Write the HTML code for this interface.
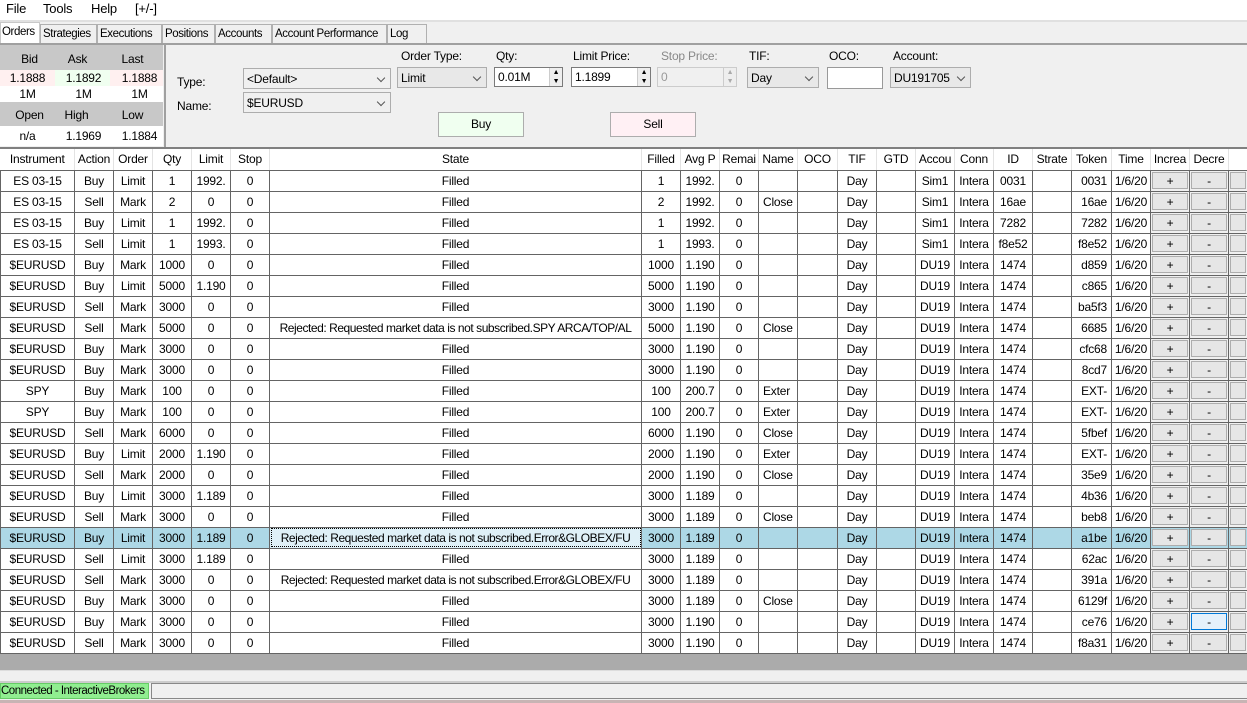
<!DOCTYPE html>
<html><head><meta charset="utf-8">
<style>
*{box-sizing:border-box;margin:0;padding:0}
body{width:1247px;height:703px;overflow:hidden;background:#f0f0f0;font-family:"Liberation Sans",Arial,sans-serif;font-size:12px;color:#000;position:relative;letter-spacing:-0.2px}
.a{position:absolute}
.menu span{position:absolute;top:0;font-size:13px}
.tab{position:absolute;top:24px;height:19px;border:1px solid #b0b0b0;border-bottom:none;background:#f0f0f0;font-size:11.5px;padding:3px 2px 0;white-space:nowrap;overflow:hidden;letter-spacing:-0.4px}
.sel{background:#fff;top:22px;height:21px;border-color:#c8c8c8}
.q{position:absolute;width:55px;text-align:center}
.dd{position:absolute;height:21px;border:1px solid #adadad;background:#e8e8e8;padding:3px 3px;font-size:12px;white-space:nowrap;overflow:hidden}
.dd:after{content:"";position:absolute;right:6px;top:6px;width:5px;height:5px;border-right:1.5px solid #555;border-bottom:1.5px solid #555;transform:rotate(45deg)}
.tb{position:absolute;height:20px;border:1px solid #7a7a7a;background:#fff;padding:2px 3px}
.spin{position:absolute;right:0;top:0;width:13px;height:18px;border-left:1px solid #ccc;background:#eee;font-size:7px;line-height:9px;text-align:center}
.lbl{position:absolute;top:49px;font-size:12px}
table{position:absolute;left:0;top:149px;width:1247px;border-collapse:collapse;table-layout:fixed;background:#fff}
td{height:21px;border:1px solid #646464;text-align:center;white-space:nowrap;overflow:hidden;font-size:12px;padding:0}
th{height:21px;font-weight:normal;border-right:1px solid #e3e3e3;border-bottom:1px solid #646464;white-space:nowrap;overflow:hidden;font-size:12px;background:#fff}
td.b{background:#f0f0f0;padding:1px}
td.b div{border:1px solid #adadad;background:#e6e6e6;height:17px;line-height:16px}
tr.h td{background:#add8e6}
td.r{text-align:right;padding-right:4px}
td.l{text-align:left;padding-left:4px}
td.s{letter-spacing:-0.45px}
</style></head><body>
<div class="menu a" style="left:0;top:0;width:1247px;height:20px;background:#fff"><span style="left:6px;top:1px">File</span><span style="left:43px;top:1px">Tools</span><span style="left:91px;top:1px">Help</span><span style="left:135px;top:1px">[+/-]</span></div>
<div class="a" style="left:0;top:20px;width:1247px;height:2px;background:#e0e0e0"></div>
<div class="tab sel" style="left:0;width:40px;padding-left:1px">Orders</div>
<div class="tab" style="left:40px;width:57px">Strategies</div>
<div class="tab" style="left:97px;width:65px">Executions</div>
<div class="tab" style="left:162px;width:53px">Positions</div>
<div class="tab" style="left:215px;width:57px">Accounts</div>
<div class="tab" style="left:272px;width:115px">Account Performance</div>
<div class="tab" style="left:387px;width:40px">Log</div>
<div class="a" style="left:0;top:43px;width:1247px;height:2px;background:#a0a0a0"></div>
<div class="a" style="left:0;top:45px;width:163px;height:25px;background:#c8c8c8"></div>
<div class="q" style="left:2px;top:52px">Bid</div><div class="q" style="left:50px;top:52px">Ask</div><div class="q" style="left:105px;top:52px">Last</div>
<div class="a" style="left:0;top:70px;width:55px;height:16px;background:#fff0f0"></div>
<div class="a" style="left:55px;top:70px;width:55px;height:16px;background:#f0fff0"></div>
<div class="a" style="left:110px;top:70px;width:53px;height:16px;background:#fff0f0"></div>
<div class="a" style="left:0;top:86px;width:163px;height:16px;background:#fff"></div>
<div class="q" style="left:0;top:71px">1.1888</div><div class="q" style="left:56px;top:71px">1.1892</div><div class="q" style="left:112px;top:71px">1.1888</div>
<div class="q" style="left:0;top:87px">1M</div><div class="q" style="left:56px;top:87px">1M</div><div class="q" style="left:112px;top:87px">1M</div>
<div class="a" style="left:0;top:102px;width:163px;height:24px;background:#c8c8c8"></div>
<div class="q" style="left:2px;top:108px">Open</div><div class="q" style="left:49px;top:108px">High</div><div class="q" style="left:105px;top:108px">Low</div>
<div class="a" style="left:0;top:126px;width:163px;height:20px;background:#fff"></div>
<div class="q" style="left:0;top:129px">n/a</div><div class="q" style="left:56px;top:129px">1.1969</div><div class="q" style="left:112px;top:129px">1.1884</div>
<div class="a" style="left:164px;top:45px;width:2px;height:102px;background:#a0a0a0"></div>
<div class="a" style="left:177px;top:75px">Type:</div>
<div class="a" style="left:177px;top:99px">Name:</div>
<div class="dd" style="left:243px;top:68px;width:148px;background:#f0f0f0">&lt;Default&gt;</div>
<div class="dd" style="left:243px;top:92px;width:148px;background:#f0f0f0">$EURUSD</div>
<div class="lbl" style="left:401px">Order Type:</div>
<div class="lbl" style="left:496px">Qty:</div>
<div class="lbl" style="left:573px">Limit Price:</div>
<div class="lbl" style="left:661px;color:#888">Stop Price:</div>
<div class="lbl" style="left:749px">TIF:</div>
<div class="lbl" style="left:829px">OCO:</div>
<div class="lbl" style="left:893px">Account:</div>
<div class="dd" style="left:397px;top:67px;width:90px">Limit</div>
<div class="tb" style="left:494px;top:67px;width:69px">0.01M<div class="spin">▲<br>▼</div></div>
<div class="tb" style="left:571px;top:67px;width:80px">1.1899<div class="spin">▲<br>▼</div></div>
<div class="tb" style="left:657px;top:67px;width:80px;border-color:#ccc;background:#f0f0f0;color:#999">0<div class="spin" style="color:#aaa">▲<br>▼</div></div>
<div class="dd" style="left:747px;top:67px;width:72px">Day</div>
<div class="tb" style="left:827px;top:67px;width:56px;border-color:#999;height:22px"></div>
<div class="dd" style="left:890px;top:67px;width:81px">DU191705</div>
<div class="a" style="left:438px;top:112px;width:86px;height:25px;border:1px solid #adadad;background:#f0fff0;text-align:center;line-height:23px">Buy</div>
<div class="a" style="left:610px;top:112px;width:86px;height:25px;border:1px solid #adadad;background:#fff0f4;text-align:center;line-height:23px">Sell</div>
<div class="a" style="left:0;top:147px;width:1247px;height:2px;background:#808080"></div>
<table>
<colgroup><col style="width:74px"><col style="width:39px"><col style="width:39px"><col style="width:39px"><col style="width:39px"><col style="width:39px"><col style="width:372px"><col style="width:39px"><col style="width:39px"><col style="width:39px"><col style="width:39px"><col style="width:40px"><col style="width:39px"><col style="width:39px"><col style="width:39px"><col style="width:39px"><col style="width:39px"><col style="width:39px"><col style="width:40px"><col style="width:39px"><col style="width:39px"><col style="width:39px"><col style="width:19px"></colgroup>
<tr><th>Instrument</th><th>Action</th><th>Order</th><th>Qty</th><th>Limit</th><th>Stop</th><th>State</th><th>Filled</th><th>Avg P</th><th>Remai</th><th>Name</th><th>OCO</th><th>TIF</th><th>GTD</th><th>Accou</th><th>Conn</th><th>ID</th><th>Strate</th><th>Token</th><th>Time</th><th>Increa</th><th>Decre</th><th></th></tr>
<tr><td>ES 03-15</td><td>Buy</td><td>Limit</td><td>1</td><td>1992.</td><td>0</td><td>Filled</td><td>1</td><td>1992.</td><td>0</td><td></td><td></td><td>Day</td><td></td><td>Sim1</td><td>Intera</td><td>0031</td><td></td><td class="r">0031</td><td>1/6/20</td><td class="b"><div>+</div></td><td class="b"><div>-</div></td><td class="b"><div></div></td></tr>
<tr><td>ES 03-15</td><td>Sell</td><td>Mark</td><td>2</td><td>0</td><td>0</td><td>Filled</td><td>2</td><td>1992.</td><td>0</td><td class="l">Close</td><td></td><td>Day</td><td></td><td>Sim1</td><td>Intera</td><td>16ae</td><td></td><td class="r">16ae</td><td>1/6/20</td><td class="b"><div>+</div></td><td class="b"><div>-</div></td><td class="b"><div></div></td></tr>
<tr><td>ES 03-15</td><td>Buy</td><td>Limit</td><td>1</td><td>1992.</td><td>0</td><td>Filled</td><td>1</td><td>1992.</td><td>0</td><td></td><td></td><td>Day</td><td></td><td>Sim1</td><td>Intera</td><td>7282</td><td></td><td class="r">7282</td><td>1/6/20</td><td class="b"><div>+</div></td><td class="b"><div>-</div></td><td class="b"><div></div></td></tr>
<tr><td>ES 03-15</td><td>Sell</td><td>Limit</td><td>1</td><td>1993.</td><td>0</td><td>Filled</td><td>1</td><td>1993.</td><td>0</td><td></td><td></td><td>Day</td><td></td><td>Sim1</td><td>Intera</td><td>f8e52</td><td></td><td class="r">f8e52</td><td>1/6/20</td><td class="b"><div>+</div></td><td class="b"><div>-</div></td><td class="b"><div></div></td></tr>
<tr><td>$EURUSD</td><td>Buy</td><td>Mark</td><td>1000</td><td>0</td><td>0</td><td>Filled</td><td>1000</td><td>1.190</td><td>0</td><td></td><td></td><td>Day</td><td></td><td>DU19</td><td>Intera</td><td>1474</td><td></td><td class="r">d859</td><td>1/6/20</td><td class="b"><div>+</div></td><td class="b"><div>-</div></td><td class="b"><div></div></td></tr>
<tr><td>$EURUSD</td><td>Buy</td><td>Limit</td><td>5000</td><td>1.190</td><td>0</td><td>Filled</td><td>5000</td><td>1.190</td><td>0</td><td></td><td></td><td>Day</td><td></td><td>DU19</td><td>Intera</td><td>1474</td><td></td><td class="r">c865</td><td>1/6/20</td><td class="b"><div>+</div></td><td class="b"><div>-</div></td><td class="b"><div></div></td></tr>
<tr><td>$EURUSD</td><td>Sell</td><td>Mark</td><td>3000</td><td>0</td><td>0</td><td>Filled</td><td>3000</td><td>1.190</td><td>0</td><td></td><td></td><td>Day</td><td></td><td>DU19</td><td>Intera</td><td>1474</td><td></td><td class="r">ba5f3</td><td>1/6/20</td><td class="b"><div>+</div></td><td class="b"><div>-</div></td><td class="b"><div></div></td></tr>
<tr><td>$EURUSD</td><td>Sell</td><td>Mark</td><td>5000</td><td>0</td><td>0</td><td class="s">Rejected: Requested market data is not subscribed.SPY ARCA/TOP/AL</td><td>5000</td><td>1.190</td><td>0</td><td class="l">Close</td><td></td><td>Day</td><td></td><td>DU19</td><td>Intera</td><td>1474</td><td></td><td class="r">6685</td><td>1/6/20</td><td class="b"><div>+</div></td><td class="b"><div>-</div></td><td class="b"><div></div></td></tr>
<tr><td>$EURUSD</td><td>Buy</td><td>Mark</td><td>3000</td><td>0</td><td>0</td><td>Filled</td><td>3000</td><td>1.190</td><td>0</td><td></td><td></td><td>Day</td><td></td><td>DU19</td><td>Intera</td><td>1474</td><td></td><td class="r">cfc68</td><td>1/6/20</td><td class="b"><div>+</div></td><td class="b"><div>-</div></td><td class="b"><div></div></td></tr>
<tr><td>$EURUSD</td><td>Buy</td><td>Mark</td><td>3000</td><td>0</td><td>0</td><td>Filled</td><td>3000</td><td>1.190</td><td>0</td><td></td><td></td><td>Day</td><td></td><td>DU19</td><td>Intera</td><td>1474</td><td></td><td class="r">8cd7</td><td>1/6/20</td><td class="b"><div>+</div></td><td class="b"><div>-</div></td><td class="b"><div></div></td></tr>
<tr><td>SPY</td><td>Buy</td><td>Mark</td><td>100</td><td>0</td><td>0</td><td>Filled</td><td>100</td><td>200.7</td><td>0</td><td class="l">Exter</td><td></td><td>Day</td><td></td><td>DU19</td><td>Intera</td><td>1474</td><td></td><td class="r">EXT-</td><td>1/6/20</td><td class="b"><div>+</div></td><td class="b"><div>-</div></td><td class="b"><div></div></td></tr>
<tr><td>SPY</td><td>Buy</td><td>Mark</td><td>100</td><td>0</td><td>0</td><td>Filled</td><td>100</td><td>200.7</td><td>0</td><td class="l">Exter</td><td></td><td>Day</td><td></td><td>DU19</td><td>Intera</td><td>1474</td><td></td><td class="r">EXT-</td><td>1/6/20</td><td class="b"><div>+</div></td><td class="b"><div>-</div></td><td class="b"><div></div></td></tr>
<tr><td>$EURUSD</td><td>Sell</td><td>Mark</td><td>6000</td><td>0</td><td>0</td><td>Filled</td><td>6000</td><td>1.190</td><td>0</td><td class="l">Close</td><td></td><td>Day</td><td></td><td>DU19</td><td>Intera</td><td>1474</td><td></td><td class="r">5fbef</td><td>1/6/20</td><td class="b"><div>+</div></td><td class="b"><div>-</div></td><td class="b"><div></div></td></tr>
<tr><td>$EURUSD</td><td>Buy</td><td>Limit</td><td>2000</td><td>1.190</td><td>0</td><td>Filled</td><td>2000</td><td>1.190</td><td>0</td><td class="l">Exter</td><td></td><td>Day</td><td></td><td>DU19</td><td>Intera</td><td>1474</td><td></td><td class="r">EXT-</td><td>1/6/20</td><td class="b"><div>+</div></td><td class="b"><div>-</div></td><td class="b"><div></div></td></tr>
<tr><td>$EURUSD</td><td>Sell</td><td>Mark</td><td>2000</td><td>0</td><td>0</td><td>Filled</td><td>2000</td><td>1.190</td><td>0</td><td class="l">Close</td><td></td><td>Day</td><td></td><td>DU19</td><td>Intera</td><td>1474</td><td></td><td class="r">35e9</td><td>1/6/20</td><td class="b"><div>+</div></td><td class="b"><div>-</div></td><td class="b"><div></div></td></tr>
<tr><td>$EURUSD</td><td>Buy</td><td>Limit</td><td>3000</td><td>1.189</td><td>0</td><td>Filled</td><td>3000</td><td>1.189</td><td>0</td><td></td><td></td><td>Day</td><td></td><td>DU19</td><td>Intera</td><td>1474</td><td></td><td class="r">4b36</td><td>1/6/20</td><td class="b"><div>+</div></td><td class="b"><div>-</div></td><td class="b"><div></div></td></tr>
<tr><td>$EURUSD</td><td>Sell</td><td>Mark</td><td>3000</td><td>0</td><td>0</td><td>Filled</td><td>3000</td><td>1.189</td><td>0</td><td class="l">Close</td><td></td><td>Day</td><td></td><td>DU19</td><td>Intera</td><td>1474</td><td></td><td class="r">beb8</td><td>1/6/20</td><td class="b"><div>+</div></td><td class="b"><div>-</div></td><td class="b"><div></div></td></tr>
<tr class="h"><td>$EURUSD</td><td>Buy</td><td>Limit</td><td>3000</td><td>1.189</td><td>0</td><td class="s" style="background:#dff0f7;outline:1px dotted #000;outline-offset:-2px">Rejected: Requested market data is not subscribed.Error&amp;GLOBEX/FU</td><td>3000</td><td>1.189</td><td>0</td><td></td><td></td><td>Day</td><td></td><td>DU19</td><td>Intera</td><td>1474</td><td></td><td class="r">a1be</td><td>1/6/20</td><td class="b"><div>+</div></td><td class="b"><div>-</div></td><td class="b"><div></div></td></tr>
<tr><td>$EURUSD</td><td>Sell</td><td>Limit</td><td>3000</td><td>1.189</td><td>0</td><td>Filled</td><td>3000</td><td>1.189</td><td>0</td><td></td><td></td><td>Day</td><td></td><td>DU19</td><td>Intera</td><td>1474</td><td></td><td class="r">62ac</td><td>1/6/20</td><td class="b"><div>+</div></td><td class="b"><div>-</div></td><td class="b"><div></div></td></tr>
<tr><td>$EURUSD</td><td>Sell</td><td>Mark</td><td>3000</td><td>0</td><td>0</td><td class="s">Rejected: Requested market data is not subscribed.Error&amp;GLOBEX/FU</td><td>3000</td><td>1.189</td><td>0</td><td></td><td></td><td>Day</td><td></td><td>DU19</td><td>Intera</td><td>1474</td><td></td><td class="r">391a</td><td>1/6/20</td><td class="b"><div>+</div></td><td class="b"><div>-</div></td><td class="b"><div></div></td></tr>
<tr><td>$EURUSD</td><td>Buy</td><td>Mark</td><td>3000</td><td>0</td><td>0</td><td>Filled</td><td>3000</td><td>1.189</td><td>0</td><td class="l">Close</td><td></td><td>Day</td><td></td><td>DU19</td><td>Intera</td><td>1474</td><td></td><td class="r">6129f</td><td>1/6/20</td><td class="b"><div>+</div></td><td class="b"><div>-</div></td><td class="b"><div></div></td></tr>
<tr><td>$EURUSD</td><td>Buy</td><td>Mark</td><td>3000</td><td>0</td><td>0</td><td>Filled</td><td>3000</td><td>1.190</td><td>0</td><td></td><td></td><td>Day</td><td></td><td>DU19</td><td>Intera</td><td>1474</td><td></td><td class="r">ce76</td><td>1/6/20</td><td class="b"><div>+</div></td><td class="b"><div style="background:#e5f1fb;border-color:#0078d7">-</div></td><td class="b"><div></div></td></tr>
<tr><td>$EURUSD</td><td>Sell</td><td>Mark</td><td>3000</td><td>0</td><td>0</td><td>Filled</td><td>3000</td><td>1.190</td><td>0</td><td></td><td></td><td>Day</td><td></td><td>DU19</td><td>Intera</td><td>1474</td><td></td><td class="r">f8a31</td><td>1/6/20</td><td class="b"><div>+</div></td><td class="b"><div>-</div></td><td class="b"><div></div></td></tr>
</table>
<div class="a" style="left:0;top:654px;width:1247px;height:16px;background:#ababab"></div>
<div class="a" style="left:0;top:670px;width:1247px;height:13px;background:#f0f0f0;border-top:1px solid #ddd;border-bottom:2px solid #ccc"></div>
<div class="a" style="left:0;top:683px;width:149px;height:16px;background:#90ee90;border:1px solid #6c6;font-size:11.5px;line-height:14px;letter-spacing:-0.5px;white-space:nowrap;overflow:hidden">Connected - InteractiveBrokers</div>
<div class="a" style="left:151px;top:683px;width:1096px;height:16px;border:1px solid #888;border-right:none;background:#f0f0f0"></div>
<div class="a" style="left:0;top:700px;width:1247px;height:3px;background:#c8b4b4"></div>
</body></html>
